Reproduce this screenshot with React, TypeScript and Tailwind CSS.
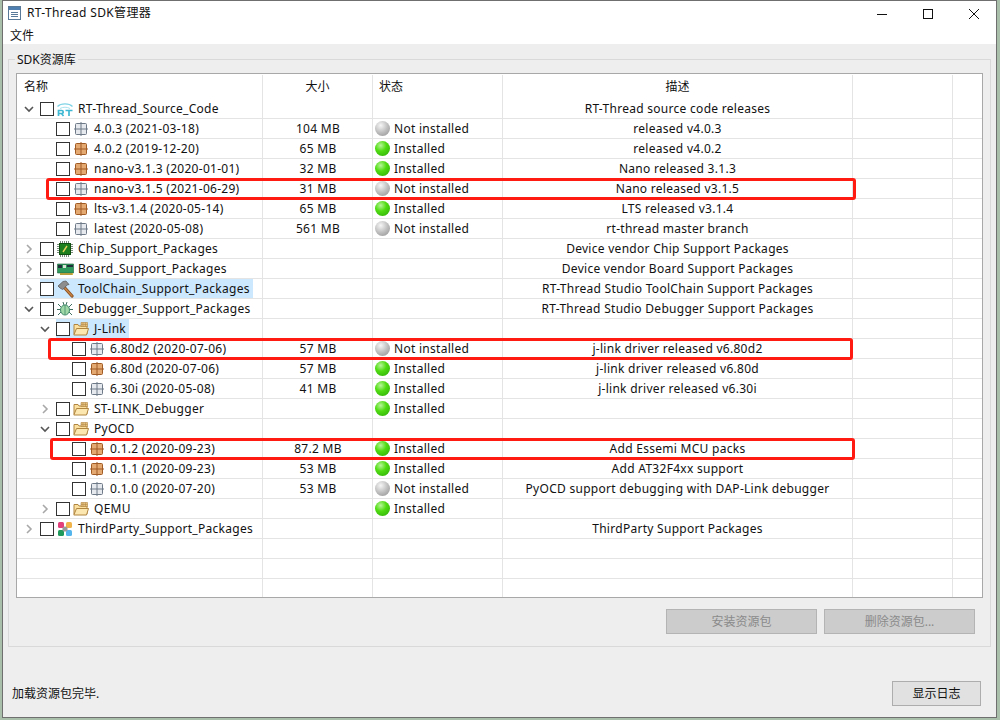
import React from "react";

const FONT = "font-['Noto_Sans','Noto_Sans_CJK_SC',sans-serif]";

function Pkg({ on }: { on: boolean }) {
  const stroke = on ? "#a05a24" : "#6f7a88";
  const fill = on ? "#e4a871" : "#e6e9ed";
  return (
    <svg width="14" height="14" viewBox="0 0 14 14" className="shrink-0">
      <rect x="1.5" y="1.5" width="11" height="11" rx="1" fill={fill} stroke={stroke} />
      <path d="M7 0v14M0 7h14" stroke={stroke} strokeWidth="1" fill="none" />
    </svg>
  );
}

function RtLogo() {
  return (
    <svg width="16" height="16" viewBox="0 0 16 16" className="shrink-0">
      <path d="M0.5 5.5C4 2 12 2 15.5 5.5" stroke="#7fd4e6" strokeWidth="1.3" fill="none" />
      <path d="M3 7.5C6 5.8 10 5.8 13 7.5" stroke="#a9e3ee" strokeWidth="1" fill="none" />
      <path d="M1.5 15V9.5h3.2a1.5 1.5 0 0 1 0 3H1.5M4.5 12.5L6.5 15M8.5 9.5h7M12 9.5V15" stroke="#3fb8d4" strokeWidth="1.7" fill="none" />
    </svg>
  );
}

function Chip() {
  return (
    <svg width="16" height="16" viewBox="0 0 16 16" className="shrink-0">
      <path d="M0 3.5h16M0 5.5h16M0 7.5h16M0 9.5h16M0 11.5h16M3.5 0v16M5.5 0v16M7.5 0v16M9.5 0v16M11.5 0v16" stroke="#7b8b7b" strokeWidth="1" />
      <rect x="2.5" y="2.5" width="11" height="11" fill="#1d7f1d" stroke="#0f4f0f" />
      <path d="M6 11L10 5" stroke="#e8d25a" strokeWidth="1.4" />
    </svg>
  );
}

function Board() {
  return (
    <svg width="17" height="16" viewBox="0 0 17 16" className="shrink-0">
      <path d="M0.5 3h16v9H0.5z" fill="#2f9a5c" stroke="#1f5f3c" strokeWidth="0.6" />
      <rect x="1" y="4" width="4" height="3" fill="#20303a" />
      <rect x="6" y="4" width="3" height="3" fill="#d8e6d8" />
      <rect x="10" y="4" width="6" height="2" fill="#20303a" />
      <path d="M3 12v2h13v-2" fill="#d8b84a" />
      <path d="M4 12v2M6 12v2M8 12v2M10 12v2M12 12v2M14 12v2" stroke="#7d6a20" strokeWidth="0.7" />
    </svg>
  );
}

function Hammer() {
  return (
    <svg width="18" height="18" viewBox="0 0 18 18" className="shrink-0">
      <path d="M7 7L15 16" stroke="#8a4f1f" strokeWidth="3.2" strokeLinecap="round" />
      <path d="M7 7L15 16" stroke="#c98545" strokeWidth="1.4" strokeLinecap="round" />
      <path d="M1 6L6 1.5l3-.5 3 3.5-2 .5-3 3.5-1.5 1L3 8z" fill="#8d8d8d" stroke="#555" strokeWidth="0.7" />
    </svg>
  );
}

function Bug() {
  return (
    <svg width="16" height="16" viewBox="0 0 16 16" className="shrink-0">
      <path d="M1 3l3 3M15 3l-3 3M0 8.5h3M16 8.5h-3M1 14l3-3M15 14l-3-3M6 1l1 3M10 1L9 4" stroke="#3f6f60" strokeWidth="1" fill="none" />
      <ellipse cx="8" cy="9" rx="4.5" ry="5" fill="#a0d8a8" stroke="#3f8a6a" />
      <path d="M8 4.5v9" stroke="#3f8a6a" strokeWidth="0.8" />
    </svg>
  );
}

function Folder() {
  return (
    <svg width="16" height="14" viewBox="0 0 16 14" className="shrink-0">
      <path d="M1 2.5h4l1 1.5h8v8H1z" fill="#fbe0a0" stroke="#b08540" />
      <path d="M8 .5h6.5v4H8z" fill="#e4c080" stroke="#b08540" strokeWidth="0.6" />
      <path d="M10 .5v4M12.5 .5v4M8 2.5h6.5" stroke="#b08540" strokeWidth="0.5" />
      <path d="M3.5 6.5h12l-2 6.5H.8z" fill="#fde7b0" stroke="#b08540" />
    </svg>
  );
}

function Third() {
  return (
    <svg width="16" height="16" viewBox="0 0 16 16" className="shrink-0">
      <rect x="1" y="1" width="6" height="6" rx="1.5" fill="#e2407a" />
      <rect x="9" y="1" width="6" height="6" rx="1.5" fill="#f0b44a" />
      <rect x="1" y="9" width="6" height="6" rx="1.5" fill="#1f9a5c" />
      <rect x="9" y="9" width="6" height="6" rx="1.5" fill="#54b4ec" />
      <circle cx="8" cy="8" r="2.6" fill="#9a9a9a" />
    </svg>
  );
}

function WinIcon() {
  return (
    <svg width="13" height="14" viewBox="0 0 13 14" className="shrink-0">
      <rect x="0.5" y="0.5" width="12" height="13" fill="#fff" stroke="#5a7a9a" />
      <rect x="1" y="1" width="11" height="3" fill="#4f7fb0" />
      <path d="M3 6.5h7M3 8.5h7M3 10.5h7" stroke="#5a7a9a" strokeWidth="1.1" />
    </svg>
  );
}

function Dot({ on }: { on: boolean }) {
  return (
    <span
      className={
        on
          ? "w-[15px] h-[15px] rounded-full shrink-0 bg-[radial-gradient(circle_at_38%_30%,#b8f59a_0%,#50dc12_40%,#2aa806_100%)]"
          : "w-[15px] h-[15px] rounded-full shrink-0 bg-[radial-gradient(circle_at_38%_30%,#f6f6f6_0%,#c0c0c0_48%,#8e8e8e_100%)]"
      }
    />
  );
}

function Chevron({ open }: { open?: boolean }) {
  return open ? (
    <svg width="10" height="10" viewBox="0 0 10 10">
      <path d="M1 3l4 4 4-4" stroke="#555" strokeWidth="1.6" fill="none" />
    </svg>
  ) : (
    <svg width="10" height="10" viewBox="0 0 10 10">
      <path d="M3 1l4 4-4 4" stroke="#a8a8a8" strokeWidth="1.6" fill="none" />
    </svg>
  );
}

type Row = {
  level: number;
  exp?: "open" | "closed";
  icon?: React.ReactNode;
  pkg?: boolean;
  label?: string;
  size?: string;
  status?: boolean;
  desc?: string;
  hl?: boolean;
};

const rows: Row[] = [
  { level: 0, exp: "open", icon: <RtLogo />, label: "RT-Thread_Source_Code", desc: "RT-Thread source code releases" },
  { level: 1, pkg: true, icon: <Pkg on={false} />, label: "4.0.3 (2021-03-18)", size: "104 MB", status: false, desc: "released v4.0.3" },
  { level: 1, pkg: true, icon: <Pkg on />, label: "4.0.2 (2019-12-20)", size: "65 MB", status: true, desc: "released v4.0.2" },
  { level: 1, pkg: true, icon: <Pkg on />, label: "nano-v3.1.3 (2020-01-01)", size: "32 MB", status: true, desc: "Nano released 3.1.3" },
  { level: 1, pkg: true, icon: <Pkg on={false} />, label: "nano-v3.1.5 (2021-06-29)", size: "31 MB", status: false, desc: "Nano released v3.1.5" },
  { level: 1, pkg: true, icon: <Pkg on />, label: "lts-v3.1.4 (2020-05-14)", size: "65 MB", status: true, desc: "LTS released v3.1.4" },
  { level: 1, pkg: true, icon: <Pkg on={false} />, label: "latest (2020-05-08)", size: "561 MB", status: false, desc: "rt-thread master branch" },
  { level: 0, exp: "closed", icon: <Chip />, label: "Chip_Support_Packages", desc: "Device vendor Chip Support Packages" },
  { level: 0, exp: "closed", icon: <Board />, label: "Board_Support_Packages", desc: "Device vendor Board Support Packages" },
  { level: 0, exp: "closed", icon: <Hammer />, label: "ToolChain_Support_Packages", desc: "RT-Thread Studio ToolChain Support Packages", hl: true },
  { level: 0, exp: "open", icon: <Bug />, label: "Debugger_Support_Packages", desc: "RT-Thread Studio Debugger Support Packages" },
  { level: 1, exp: "open", icon: <Folder />, label: "J-Link", hl: true },
  { level: 2, pkg: true, icon: <Pkg on={false} />, label: "6.80d2 (2020-07-06)", size: "57 MB", status: false, desc: "j-link driver released v6.80d2" },
  { level: 2, pkg: true, icon: <Pkg on />, label: "6.80d (2020-07-06)", size: "57 MB", status: true, desc: "j-link driver released v6.80d" },
  { level: 2, pkg: true, icon: <Pkg on={false} />, label: "6.30i (2020-05-08)", size: "41 MB", status: true, desc: "j-link driver released v6.30i" },
  { level: 1, exp: "closed", icon: <Folder />, label: "ST-LINK_Debugger", status: true },
  { level: 1, exp: "open", icon: <Folder />, label: "PyOCD" },
  { level: 2, pkg: true, icon: <Pkg on />, label: "0.1.2 (2020-09-23)", size: "87.2 MB", status: true, desc: "Add Essemi MCU packs" },
  { level: 2, pkg: true, icon: <Pkg on />, label: "0.1.1 (2020-09-23)", size: "53 MB", status: true, desc: "Add AT32F4xx support" },
  { level: 2, pkg: true, icon: <Pkg on={false} />, label: "0.1.0 (2020-07-20)", size: "53 MB", status: false, desc: "PyOCD support debugging with DAP-Link debugger" },
  { level: 1, exp: "closed", icon: <Folder />, label: "QEMU", status: true },
  { level: 0, exp: "closed", icon: <Third />, label: "ThirdParty_Support_Packages", desc: "ThirdParty Support Packages" },
];

const COLS = "grid grid-cols-[246px_110px_130px_350px_100px_1fr]";
const CELL = "border-r border-[#e4e4e4] last:border-r-0";

function TreeRow({ r }: { r: Row }) {
  const pad = r.level === 0 ? "pl-[7px]" : r.level === 1 ? "pl-[23px]" : "pl-[39px]";
  return (
    <div className={`${COLS} h-[20px] border-b border-[#e4e4e4] text-[12px] leading-[19px] tracking-[0.28px] text-[#111]`}>
      <div className={`${CELL} ${pad} flex items-center overflow-hidden whitespace-nowrap`}>
        <span className="w-[16px] shrink-0 flex items-center justify-start">
          {r.exp ? <Chevron open={r.exp === "open"} /> : null}
        </span>
        {r.label ? (
          <span className={`flex items-center h-[19px] ${r.hl ? "bg-[#cce8ff] pr-[3px]" : ""}`}>
            <span className="w-[14px] h-[14px] border border-[#333] bg-white shrink-0" />
            <span className={`w-[20px] ${r.pkg ? "ml-[4px]" : "ml-[3px]"} shrink-0 flex items-center justify-start`}>{r.icon}</span>
            <span className={r.pkg ? "" : "ml-[1px]"}>{r.label}</span>
          </span>
        ) : null}
      </div>
      <div className={`${CELL} text-center pl-[1px]`}>{r.size}</div>
      <div className={`${CELL} pl-[2px] flex items-center gap-[4px]`}>
        {r.status !== undefined ? (
          <>
            <Dot on={r.status} />
            <span>{r.status ? "Installed" : "Not installed"}</span>
          </>
        ) : null}
      </div>
      <div className={`${CELL} text-center whitespace-nowrap`}>{r.desc}</div>
      <div className={CELL} />
      <div className={CELL} />
    </div>
  );
}

function Mark({ className }: { className: string }) {
  return <div className={`absolute h-[22px] border-[3px] border-[#ff1a12] rounded-[3px] pointer-events-none ${className}`} />;
}

export default function App() {
  return (
    <div className={`${FONT} w-[1000px] h-[720px] bg-[#a9bfa9] overflow-hidden pl-[2px] pr-[3px] pb-[2px] text-[12px] text-[#111]`}>
      <div className="relative h-[718px] flex flex-col border border-[#6f6f6f] bg-[#eeeeee]">
        <div className="h-[43px] bg-white shrink-0 flex flex-col">
          <div className="h-[24px] flex items-center pl-[5px]">
            <WinIcon />
            <span className="ml-[6px] tracking-[0.34px]">RT-Thread SDK管理器</span>
            <div className="ml-auto flex items-center -mr-[1px] mt-[1px]">
              <span className="w-[46px] flex justify-center">
                <svg width="10" height="10" viewBox="0 0 10 10"><path d="M0 5.5h10" stroke="#111" strokeWidth="1" /></svg>
              </span>
              <span className="w-[46px] flex justify-center">
                <svg width="10" height="10" viewBox="0 0 10 10"><rect x="0.5" y="0.5" width="9" height="9" fill="none" stroke="#111" /></svg>
              </span>
              <span className="w-[46px] flex justify-center">
                <svg width="10" height="10" viewBox="0 0 10 10"><path d="M0 0l10 10M10 0L0 10" stroke="#111" strokeWidth="1" /></svg>
              </span>
            </div>
          </div>
          <div className="mt-[2px] pl-[7px] leading-[17px]">文件</div>
        </div>

        <div className="mt-[15px] mx-[5px] h-[588px] border border-[#d9d9d9] px-[7px] flex flex-col shrink-0">
          <div className="-mt-[9px] -ml-[1px] w-fit bg-[#eeeeee] px-[2px] leading-[17px]">SDK资源库</div>
          <div className="mt-[5px] h-[525px] shrink-0 border border-[#a8a8a8] bg-white overflow-hidden">
            <div className={`${COLS} h-[24px] mt-[1px] text-[12px] leading-[24px]`}>
              <div className={`${CELL} pl-[7px]`}>名称</div>
              <div className={`${CELL} text-center`}>大小</div>
              <div className={`${CELL} pl-[6px]`}>状态</div>
              <div className={`${CELL} text-center`}>描述</div>
              <div className={CELL} />
              <div className={CELL} />
            </div>
            {rows.map((r, i) => (
              <TreeRow key={i} r={r} />
            ))}
            <TreeRow r={{ level: 0 }} />
            <TreeRow r={{ level: 0 }} />
            <TreeRow r={{ level: 0 }} />
          </div>
          <div className="mt-[11px] flex justify-end gap-[7px] pr-[8px]">
            <button className="w-[151px] h-[25px] bg-[#cccccc] border border-[#b4b4b4] text-[#8a8a8a]">安装资源包</button>
            <button className="w-[151px] h-[25px] bg-[#cccccc] border border-[#b4b4b4] text-[#8a8a8a]">删除资源包...</button>
          </div>
        </div>

        <div className="flex items-center justify-between mt-[34px] pl-[9px] pr-[15px]">
          <span>加载资源包完毕.</span>
          <button className="w-[89px] h-[25px] bg-[#e1e1e1] border border-[#adadad] text-[#111]">显示日志</button>
        </div>

        <Mark className="left-[43px] top-[177px] w-[810px]" />
        <Mark className="left-[45px] top-[337px] w-[805px]" />
        <Mark className="left-[47px] top-[437px] w-[805px]" />
      </div>
    </div>
  );
}
